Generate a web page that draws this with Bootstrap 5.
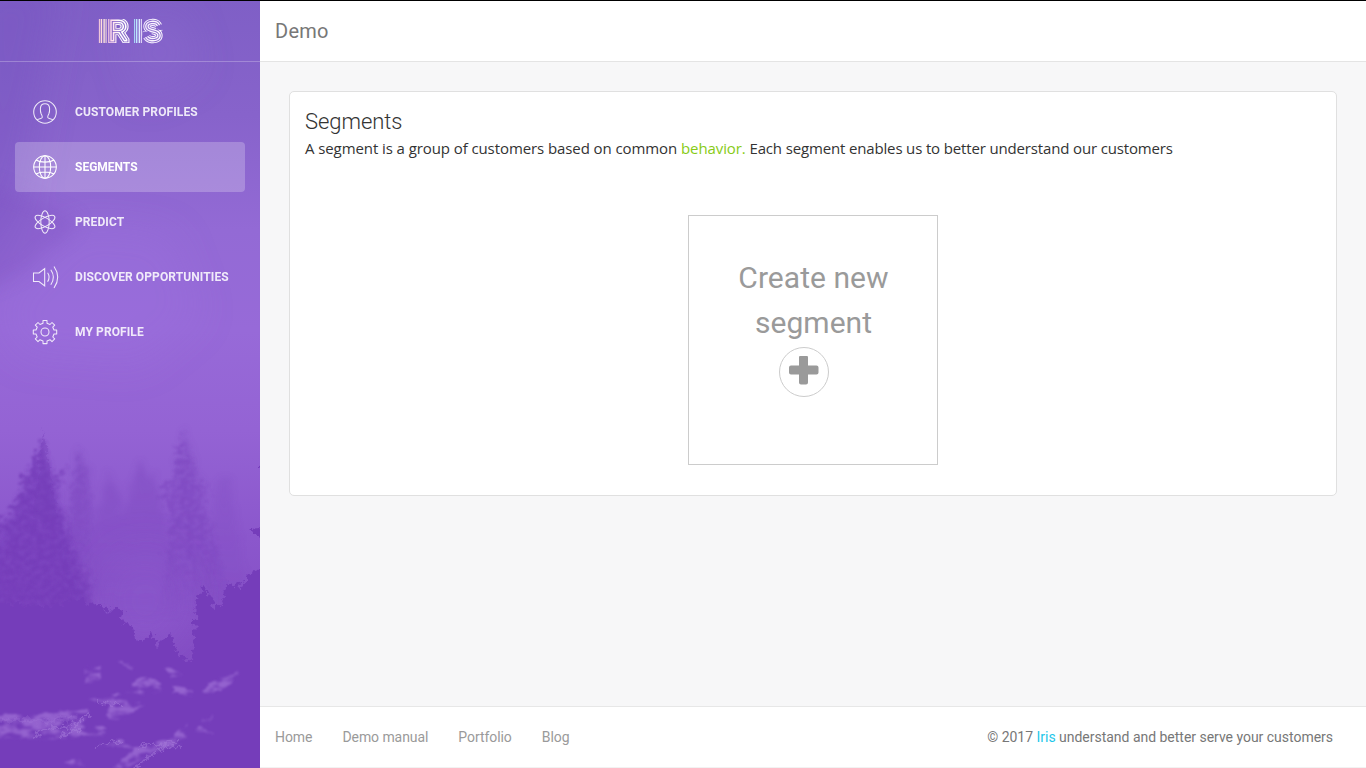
<!DOCTYPE html>
<html lang="en">
<head>
<meta charset="utf-8">
<meta name="viewport" content="width=device-width, initial-scale=1">
<title>Iris</title>
<link rel="stylesheet" href="https://cdn.jsdelivr.net/npm/bootstrap@5.3.0/dist/css/bootstrap.min.css">
<style>
body{font-family:Roboto,"Liberation Sans",sans-serif;background:#f7f7f8;color:#333;border-top:1px solid #000;font-size:14px}
a{text-decoration:none}
.sidebar{width:260px;background:#8b60d0}
.scenery{z-index:0}
.brand{height:61px;border-bottom:1px solid rgba(255,255,255,.25)}
.side-nav{padding:25px 15px;gap:5px}
.side-nav .nav-link{height:50px;border-radius:4px;padding:0 15px;color:#fff;opacity:.86;font-size:12px;font-weight:700;letter-spacing:.1px;text-transform:uppercase;white-space:nowrap}
.side-nav .nav-link.active{background:rgba(255,255,255,.23);opacity:1;letter-spacing:0}
.side-nav svg{width:30px;height:30px;margin:-1px 15px 0 0;fill:none;stroke:#fff;stroke-width:1.05;overflow:visible}
.topbar{height:61px;border-bottom:1px solid #e4e4e4;padding:0 15px;font-size:20px;letter-spacing:.25px;color:#777}
.content{padding:29px 29px 0}
.panel{height:405px;border:1px solid #e0e0e0;border-radius:5px;padding:15px}
.panel h4{font-weight:300;font-size:22px;line-height:30px;letter-spacing:-.05px;margin:0}
.panel p{font-family:"Open Sans",sans-serif;font-size:15px;line-height:22px;letter-spacing:-.085px;margin:0}
.panel p .rest{letter-spacing:-.15px}
.green{color:#87cb16}.aqua{color:#1dc7ea}
.create{width:250px;height:250px;border:1px solid #ccc;margin-top:56px;padding:39px 39px 39px 40px;font-size:30px;line-height:45px;letter-spacing:.05px;color:#9a9a9a}
.plus{width:50px;height:50px;border:1px solid #ccc;margin:2px 0 0 50px}
.foot{height:62px;border-top:1px solid #e7e7e7;border-bottom:1px solid #f2f2f2;padding:0 33px 0 15px}
.foot .nav{gap:30px;letter-spacing:-.07px}
.foot .nav a{color:#9a9a9a}
.foot .legal{color:#777;letter-spacing:-.02px}
</style>
</head>
<body class="d-flex vh-100 overflow-hidden">
<aside class="sidebar position-relative flex-shrink-0 overflow-hidden">
  <svg class="scenery position-absolute top-0 start-0" width="260" height="767" viewBox="0 1 260 767" aria-hidden="true">
    <defs>
      <linearGradient id="sky" x1="0" y1="0" x2="0" y2="1">
        <stop offset="0" stop-color="#7f5fc6"/><stop offset=".15" stop-color="#8763cb"/><stop offset=".3" stop-color="#936ad5"/><stop offset=".43" stop-color="#976ad8"/><stop offset=".56" stop-color="#9463d4"/><stop offset=".7" stop-color="#8b57cc"/><stop offset=".82" stop-color="#854fc5"/><stop offset="1" stop-color="#7a42bb"/>
      </linearGradient>
      <linearGradient id="mist" x1="0" y1="420" x2="0" y2="640" gradientUnits="userSpaceOnUse"><stop offset="0" stop-color="#7440b8" stop-opacity=".8"/><stop offset="1" stop-color="#7a42bd" stop-opacity=".1"/></linearGradient>
      <linearGradient id="fade" x1="0" y1="430" x2="0" y2="600" gradientUnits="userSpaceOnUse"><stop offset="0" stop-color="#733ab7"/><stop offset=".6" stop-color="#733ab7" stop-opacity=".8"/><stop offset="1" stop-color="#733ab7" stop-opacity="0"/></linearGradient>
      <filter id="rough" x="-20%" y="-10%" width="140%" height="120%"><feTurbulence type="fractalNoise" baseFrequency=".2" numOctaves="3" seed="7"/><feDisplacementMap in="SourceGraphic" scale="12" xChannelSelector="R" yChannelSelector="G"/><feGaussianBlur stdDeviation=".6"/></filter>
      <filter id="wispy" x="-30%" y="-10%" width="160%" height="120%"><feTurbulence type="fractalNoise" baseFrequency=".16 .2" numOctaves="4" seed="11" result="n"/><feDisplacementMap in="SourceGraphic" in2="n" scale="26" xChannelSelector="R" yChannelSelector="G" result="d"/><feColorMatrix in="n" values="0 0 0 0 0 0 0 0 0 0 0 0 0 0 0 3 0 0 0 -.8" result="m"/><feComposite in="d" in2="m" operator="in"/><feGaussianBlur stdDeviation=".8"/></filter>
      <filter id="glint" x="-20%" y="-30%" width="140%" height="160%"><feTurbulence type="fractalNoise" baseFrequency=".07 .15" numOctaves="4" seed="5" result="n"/><feDisplacementMap in="SourceGraphic" in2="n" scale="10" xChannelSelector="R" yChannelSelector="G" result="d"/><feColorMatrix in="n" values="0 0 0 0 0 0 0 0 0 0 0 0 0 0 0 0 4 0 0 -1.4" result="m"/><feComposite in="d" in2="m" operator="in"/><feGaussianBlur stdDeviation=".9"/></filter>
      <filter id="hazy" x="-20%" y="-10%" width="140%" height="120%"><feTurbulence type="fractalNoise" baseFrequency=".12" numOctaves="4" seed="3"/><feDisplacementMap in="SourceGraphic" scale="15" xChannelSelector="R" yChannelSelector="G"/><feGaussianBlur stdDeviation="3"/></filter>
      <filter id="cloud" x="-50%" y="-50%" width="200%" height="200%"><feGaussianBlur stdDeviation="18"/></filter>
      <filter id="soft" x="-50%" y="-50%" width="200%" height="200%"><feGaussianBlur stdDeviation="9"/></filter>
    </defs>
    <rect width="260" height="768" fill="url(#sky)"/>
    <g filter="url(#cloud)"><path d="M-30-20h90L20 200l-50 90z" fill="#7852c0" opacity=".45"/><path d="M80 225l90 10 30 80-60 50-120-10-20-50z" fill="#a073e2" opacity=".25"/><path d="M120 30l60-20 20 60-60 30z" fill="#8f6dd0" opacity=".3"/><ellipse cx="145" cy="600" rx="45" ry="50" fill="#925fd3" opacity=".4"/></g>
    <path filter="url(#soft)" d="M-30 175l110 45-12 16-28 18-10 14-60 30z" fill="#7b50c0" opacity=".3"/>
    <g filter="url(#hazy)" fill="url(#mist)" opacity=".5">
      <path d="M79 447l8 22 5 30 8 100H63l7-90z"/>
      <path d="M108 468l13 35 10 95H92l6-90zM141 462l9 21 3-12 18 66 10 80h-74l16-100z"/>
      <path d="M218 473l12 9 10 60 8 65h-46z" opacity=".6"/>
      <path d="M182 428l14 30 8 60 14 90h-58l12-90z" opacity=".6"/>
    </g>
    <g filter="url(#wispy)" fill="url(#fade)" opacity=".4">
      <path d="M181 433l10 20 6 25 14 14-8 12 12 30 14 70h-66l10-80-10-32 10-18z"/>
      <path d="M184 438l6 40 10 120h-8l-10-110z" opacity=".8"/>
      <path d="M79 450l9 25 4 30-4 70H70l2-75z" opacity=".55"/>
    </g>
    <path filter="url(#hazy)" d="M43 450l12 40 14 60 20 65H-8v-70l26-40z" fill="#753dba" opacity=".6"/>
    <g filter="url(#wispy)" fill="#733ab7" opacity=".72">
      <path d="M44 438l5 22 3 16 16-11-8 20-6 10 14 24 6 32 18 32-2 38H-12v-70l20-8 6-38 8-26 12-16z"/>
      <path d="M43 436l6 26 8 44 12 55 6 60H8l10-70 12-50z"/>
      <path d="M-8 515l20 4 8 10-22 10z"/>
    </g>
    <g filter="url(#rough)" fill="#753dba">
      <path d="M43 429l3 18 5 30 6 40-12 8-12-12 6-35z" opacity=".4"/>
      <path d="M266 458l-5 8 3 62-15 1 10 8 8 8v18l-10 9-10 9v14l-5-2-2-9-5 1-3 12-5-3-5 20 13 12h30z"/>
      <path d="M-8 601l24 3 30 4 16-4 20-4 10 5 8-2 8 10 8-8 7 8-2 9 12 5 2 10 6 6 12-11 4 14 14-14 4 15 4 9 12 6 3-24 2-36 7-17 8 12 3 13 7-5 6-23 14 8 10-19 18-4v210H-8z"/>
    </g>
    <g filter="url(#glint)" fill="#a577da" opacity=".65">
      <path d="M84 668l17-1v12l-15 5zM118 662l17 4-3 5zM126 692l15-14 14 1 8 12-22 4zM165 669l18 4-8 6zM172 686l21 5v5l-21-2zM203 693l15-16 21-3-17 18zM88 699l30-4 11 8 16 2-24 16-15-3 4-13zM-4 716l78-4 18-3-12 18 20-1 6 9-50 4-60-1zM98 745l25-4 14 8 32-10 18-14-5 19-25 7-30 18h-14l20-20zM198 725l16-13-8 16 8 7-15-3zM62 764l18-8 6 10z"/>
    </g>
    <g filter="url(#rough)" fill="none" stroke="#a77ddb" stroke-linecap="round" opacity=".5">
      <path d="M34 738q10-11 22-10l16-2 18-12M62 736q10-7 20-6M97 748q8-9 26-5M130 770l24-16 10-8 18 2M140 748q10-9 16-2l22-6M96 703l24 1" stroke-width="2"/>
      <path d="M-4 720l50 1 28-4" stroke-width="3" opacity=".5"/>
    </g>
  </svg>
  <div class="position-relative">
    <div class="brand d-flex justify-content-center">
      <svg width="70" height="52" viewBox="95 1 70 52" role="img" aria-label="IRIS">
        <defs>
          <g id="wordmark" font-family="Roboto,sans-serif" font-weight="100"><text y="46" font-size="42" x="97.300">I</text><text font-size="25" transform="translate(109.200 39.900) scale(1.130 1)">R</text><text y="46" font-size="42" x="132.400">I</text><text font-size="26.500" transform="translate(144.800 40.400)">S</text></g>
          <mask id="lines" maskUnits="userSpaceOnUse" x="95" y="0" width="70" height="52">
            <use href="#wordmark" fill="#fff" stroke="#fff" stroke-width="6.500"/>
            <use href="#wordmark" fill="#000" stroke="#000" stroke-width="4.600"/>
            <use href="#wordmark" fill="#fff" stroke="#fff" stroke-width="2.900"/>
            <use href="#wordmark" fill="#000" stroke="#000" stroke-width=".2"/>
            <path d="M154.500 27.200L166 22.500v7.300l-6 .2zM152.500 34L142.500 38.500v-6.300l6-1z"/>
          </mask>
          <linearGradient id="tint"><stop offset="0" stop-color="#ffc4da"/><stop offset=".13" stop-color="#ffeedd"/><stop offset=".18" stop-color="#ffd0e4"/><stop offset=".35" stop-color="#fff"/><stop offset=".52" stop-color="#fff"/><stop offset=".56" stop-color="#a9e6ff"/><stop offset=".66" stop-color="#f3eaff"/><stop offset="1" stop-color="#fff"/></linearGradient>
        </defs>
        <path d="M96 19h47v-3h22v30h-22v-3H96z" fill="url(#tint)" mask="url(#lines)"/>
      </svg>
    </div>
    <nav class="side-nav nav flex-column flex-nowrap">
      <a class="nav-link d-flex align-items-center" href="#"><svg viewBox="0 0 30 30"><circle cx="15" cy="15" r="11.3"/><path d="M7 23.1c1.3-1.4 4.7-1.4 5.2-2.5.4-1.2-.3-2.2-1-3.6-.7-1.5-.9-3.5-.8-5.5.1-3 1.8-4.8 4.6-4.8s4.5 1.8 4.6 4.8c.1 2-.1 4-.8 5.5-.7 1.4-1.4 2.4-1 3.6.5 1.1 3.9 1.1 5.2 2.5"/></svg>Customer Profiles</a>
      <a class="nav-link active d-flex align-items-center" href="#"><svg viewBox="0 0 30 30"><circle cx="15" cy="15" r="11.3"/><ellipse cx="15" cy="15" rx="5.7" ry="11.3"/><path d="M3.5 15h23M15 3.5v23M6 8c2.5 1.6 5.5 2.1 9 2.1s6.500-.5 9-2.1M6 22c2.500-1.600 5.500-2.100 9-2.100s6.500.500 9 2.100"/></svg>Segments</a>
      <a class="nav-link d-flex align-items-center" href="#"><svg viewBox="0 0 30 30"><ellipse cx="15" cy="15" rx="4.200" ry="11.200"/><ellipse cx="15" cy="15" rx="4.200" ry="11.200" transform="rotate(60 15 15)"/><ellipse cx="15" cy="15" rx="4.200" ry="11.200" transform="rotate(-60 15 15)"/></svg>Predict</a>
      <a class="nav-link d-flex align-items-center" href="#"><svg viewBox="0 0 30 30"><path d="M3.500 11h5.500l5.700-4.500v17.500L9 19.500H3.500zM17.600 10.700q3 4.300 0 9M20.800 7.700q5.200 7.500 0 15M24 4.500q7.500 10.700 0 21.500"/></svg>Discover Opportunities</a>
      <a class="nav-link d-flex align-items-center" href="#"><svg viewBox="0 0 30 30"><circle cx="15" cy="15" r="4"/><path d="M13 3.500h4v2.700l3 1.300 2-2 2.700 2.700-1.900 2 1.200 2.800h2.700v4H24l-1.200 3 1.900 1.900-2.700 2.700-2-1.900-3 1.200v2.700h-4v-2.700l-3-1.200-2 1.900-2.700-2.700L7.200 20 6 17H3.300v-4H6l1.200-2.800-1.900-2L8 5.500l2 2 3-1.300z" stroke-linejoin="round"/></svg>My Profile</a>
    </nav>
  </div>
</aside>
<div class="d-flex flex-column flex-grow-1">
  <header class="topbar bg-white d-flex align-items-center">Demo</header>
  <main class="content flex-grow-1">
    <section class="panel bg-white">
      <h4>Segments</h4>
      <p>A segment is a group of customers based on common <span class="green">behavior.</span><span class="rest"> Each segment enables us to better understand our customers</span></p>
      <div class="create mx-auto text-center">Create new segment
        <div class="plus rounded-circle d-flex justify-content-center"><svg class="mt-2" width="30" height="30" viewBox="0 1 30 30"><path d="M12 .5h5q2 0 2 2v8h8.500q2 0 2 2v5q0 2-2 2H19v8q0 2-2 2h-5q-2 0-2-2v-8H2q-2 0-2-2v-5q0-2 2-2h8v-8q0-2 2-2z" fill="#9a9a9a"/></svg></div>
      </div>
    </section>
  </main>
  <footer class="foot bg-white d-flex align-items-center justify-content-between">
    <nav class="nav"><a href="#">Home</a><a href="#">Demo manual</a><a href="#">Portfolio</a><a href="#">Blog</a></nav>
    <div class="legal">© 2017 <a class="aqua" href="#">Iris</a> understand and better serve your customers</div>
  </footer>
</div>
<script src="https://cdn.jsdelivr.net/npm/bootstrap@5.3.0/dist/js/bootstrap.bundle.min.js"></script>
</body>
</html>
